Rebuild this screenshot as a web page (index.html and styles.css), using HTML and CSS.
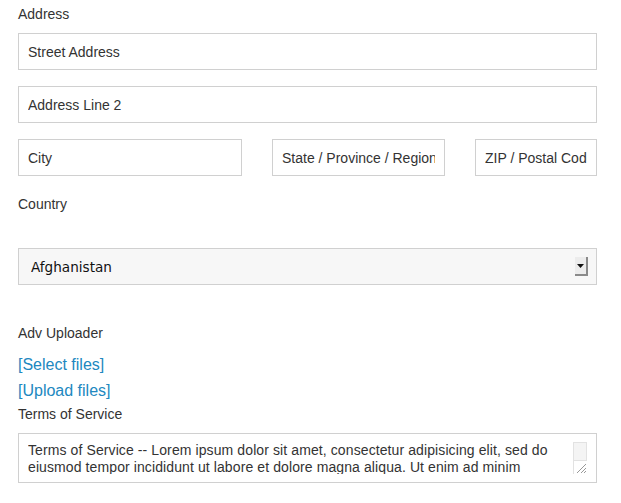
FILE: index.html
```html
<!DOCTYPE html>
<html>
<head>
<meta charset="utf-8">
<link rel="stylesheet" href="styles.css">
</head>
<body>
<form class="form">
  <label class="label label-address">Address</label>
  <input class="field field-full" type="text" placeholder="Street Address">
  <input class="field field-full field-gap" type="text" placeholder="Address Line 2">
  <div class="row field-gap">
    <input class="field field-city" type="text" placeholder="City">
    <input class="field field-state" type="text" placeholder="State / Province / Region">
    <input class="field field-zip" type="text" placeholder="ZIP / Postal Code">
  </div>
  <label class="label label-country">Country</label>
  <div class="select-wrap">
    <select class="select"><option>Afghanistan</option></select>
    <span class="select-btn"><svg width="7" height="4" viewBox="0 0 7 4"><path d="M0 0h7L3.5 4z" fill="#111"/></svg></span>
  </div>
  <label class="label label-uploader">Adv Uploader</label>
  <div class="links">
    <a class="link" href="#">[Select files]</a>
    <a class="link" href="#">[Upload files]</a>
  </div>
  <label class="label label-terms">Terms of Service</label>
  <div class="textarea-wrap">
    <textarea class="textarea" readonly>Terms of Service -- Lorem ipsum dolor sit amet, consectetur adipisicing elit, sed do eiusmod tempor incididunt ut labore et dolore magna aliqua. Ut enim ad minim veniam, quis nostrud exercitation ullamco laboris nisi ut aliquip ex ea commodo consequat.</textarea>
    <span class="scroll-track"></span>
    <span class="grip"><svg width="13" height="13" viewBox="0 0 13 13"><path d="M12 3L3 12M12 7L7 12M12 10L10 12" stroke="#999" stroke-width="1"/></svg></span>
  </div>
</form>
</body>
</html>
```
FILE: styles.css
```css
html, body {
  margin: 0;
  padding: 0;
  background: #fff;
}
body {
  font-family: "Liberation Sans", Arial, sans-serif;
  font-size: 14px;
  color: #333;
}
.form {
  display: flex;
  flex-direction: column;
  width: 579px;
  padding-left: 18px;
}
.label {
  display: block;
  font-size: 14px;
  line-height: 17px;
  color: #333;
}
.label-address { margin-top: 6px; margin-bottom: 10px; }
.label-country { margin-top: 20px; margin-bottom: 35px; }
.label-uploader { margin-top: 40px; margin-bottom: 10px; }
.label-terms { margin-top: 2px; margin-bottom: 10px; }

.field {
  box-sizing: border-box;
  height: 37px;
  margin: 0;
  border: 1px solid #d0d0d0;
  padding: 0 9px;
  font-family: "Liberation Sans", Arial, sans-serif;
  font-size: 14px;
  color: #333;
  background: #fff;
  outline: none;
}
.field::placeholder { color: #333; opacity: 1; }
.field-full { width: 579px; }
.field-gap { margin-top: 16px; }
.row {
  display: flex;
  gap: 30px;
}
.field-city { width: 224px; }
.field-state { width: 173px; }
.field-zip { width: 122px; }

.select-wrap {
  position: relative;
  width: 579px;
  height: 37px;
}
.select {
  box-sizing: border-box;
  width: 579px;
  height: 37px;
  margin: 0;
  padding: 0 0 0 12px;
  border: 1px solid #d0d0d0;
  border-radius: 0;
  background: #f7f7f7;
  -webkit-appearance: none;
  appearance: none;
  font-family: "DejaVu Sans", "Lucida Grande", sans-serif;
  font-size: 13.6px;
  color: #111;
  outline: none;
}
.select-btn {
  position: absolute;
  left: 557px;
  top: 9px;
  box-sizing: border-box;
  width: 13px;
  height: 19px;
  background: #ececec;
  border-right: 2px solid #8a8a8a;
  border-bottom: 2px solid #8a8a8a;
  display: flex;
  align-items: center;
  justify-content: center;
}
.select-btn svg { display: block; }

.links {
  display: flex;
  flex-direction: column;
  align-items: flex-start;
}
.link {
  font-size: 16px;
  line-height: 26px;
  color: #2188c0;
  text-decoration: none;
}

.textarea-wrap {
  position: relative;
  box-sizing: border-box;
  width: 579px;
  height: 50px;
  border: 1px solid #d0d0d0;
  padding: 8px 0 8px 9px;
  background: #fff;
}
.textarea {
  box-sizing: border-box;
  display: block;
  width: 525px;
  height: 32px;
  margin: 0;
  padding: 0;
  border: 0;
  resize: none;
  overflow: hidden;
  font-family: "Liberation Sans", Arial, sans-serif;
  font-size: 14px;
  line-height: 17px;
  letter-spacing: 0.1px;
  color: #333;
  background: transparent;
  outline: none;
}
.scroll-track {
  position: absolute;
  left: 554px;
  top: 8px;
  box-sizing: border-box;
  width: 14px;
  height: 19px;
  background: #f4f4f4;
  border: 1px solid #e2e2e2;
}
.grip {
  position: absolute;
  left: 554px;
  top: 27px;
  width: 14px;
  height: 13px;
  border-left: 1px solid #e2e2e2;
}
.grip svg { display: block; }
```
